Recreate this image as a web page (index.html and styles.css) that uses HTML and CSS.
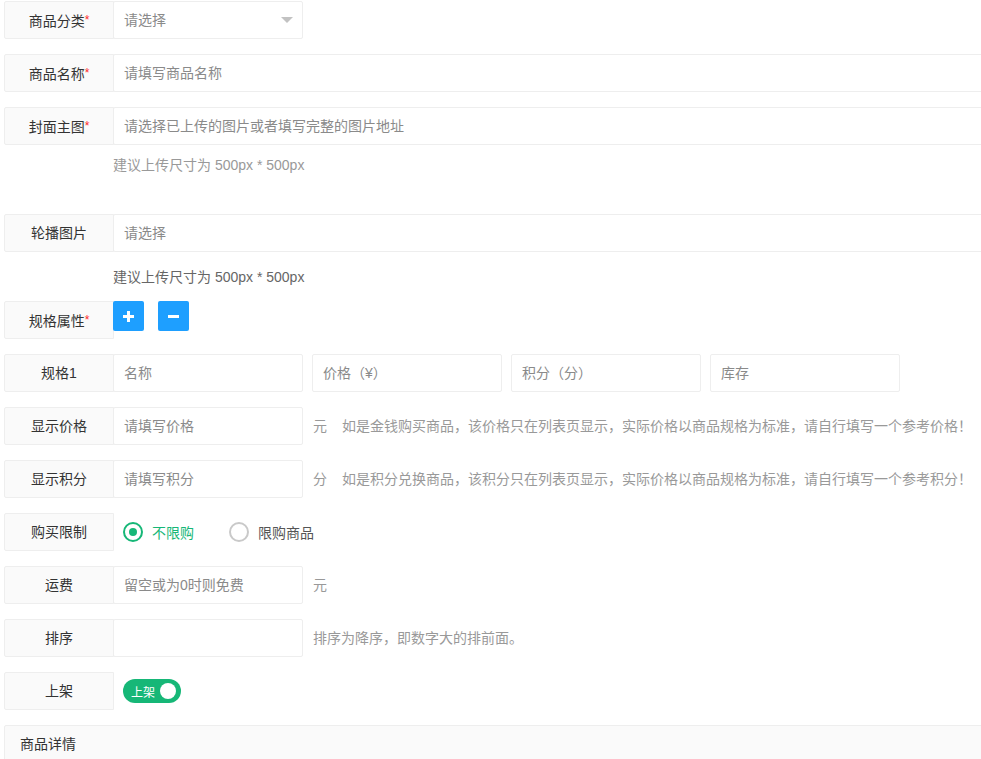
FILE: index.html
```html
<!DOCTYPE html>
<html lang="zh-CN">
<head>
  <meta charset="UTF-8">
  <meta name="viewport" content="width=device-width, initial-scale=1.0">
  <title>添加商品</title>
  <link rel="stylesheet" href="styles.css">
</head>
<body>
  <form class="form">
    <div class="form-item">
      <label class="form-label">商品分类<span class="req">*</span></label>
      <div class="input-inline">
        <input class="input" type="text" placeholder="请选择" readonly>
        <i class="caret"></i>
      </div>
    </div>

    <div class="form-item">
      <label class="form-label">商品名称<span class="req">*</span></label>
      <div class="input-block">
        <input class="input" type="text" placeholder="请填写商品名称">
      </div>
    </div>

    <div class="form-item">
      <label class="form-label">封面主图<span class="req">*</span></label>
      <div class="input-block">
        <input class="input" type="text" placeholder="请选择已上传的图片或者填写完整的图片地址">
        <div class="tip tip-light">建议上传尺寸为 500px * 500px</div>
        <div class="preview"></div>
      </div>
    </div>

    <div class="form-item form-item-tight">
      <label class="form-label">轮播图片</label>
      <div class="input-block">
        <input class="input" type="text" placeholder="请选择">
        <div class="tip tip-dark">建议上传尺寸为 500px * 500px</div>
      </div>
    </div>

    <div class="form-item">
      <label class="form-label">规格属性<span class="req">*</span></label>
      <div class="btn-group">
        <button type="button" class="btn" title="添加规格">
          <svg width="11" height="11" viewBox="0 0 11 11"><path d="M4 0h3v4h4v3H7v4H4V7H0V4h4z" fill="#fff"/></svg>
        </button>
        <button type="button" class="btn" title="删除规格">
          <svg width="11" height="11" viewBox="0 0 11 11"><path d="M0 4h11v3H0z" fill="#fff"/></svg>
        </button>
      </div>
    </div>

    <div class="form-item">
      <label class="form-label">规格1</label>
      <div class="input-inline"><input class="input" type="text" placeholder="名称"></div>
      <div class="input-inline"><input class="input" type="text" placeholder="价格（¥）"></div>
      <div class="input-inline"><input class="input" type="text" placeholder="积分（分）"></div>
      <div class="input-inline"><input class="input" type="text" placeholder="库存"></div>
    </div>

    <div class="form-item">
      <label class="form-label">显示价格</label>
      <div class="input-inline"><input class="input" type="text" placeholder="请填写价格"></div>
      <div class="mid unit">元</div>
      <div class="mid">如是金钱购买商品，该价格只在列表页显示，实际价格以商品规格为标准，请自行填写一个参考价格！</div>
    </div>

    <div class="form-item">
      <label class="form-label">显示积分</label>
      <div class="input-inline"><input class="input" type="text" placeholder="请填写积分"></div>
      <div class="mid unit">分</div>
      <div class="mid">如是积分兑换商品，该积分只在列表页显示，实际价格以商品规格为标准，请自行填写一个参考积分！</div>
    </div>

    <div class="form-item">
      <label class="form-label">购买限制</label>
      <div class="radio-group">
        <span class="radio checked"><i class="radio-icon"></i>不限购</span>
        <span class="radio"><i class="radio-icon"></i>限购商品</span>
      </div>
    </div>

    <div class="form-item">
      <label class="form-label">运费</label>
      <div class="input-inline"><input class="input" type="text" placeholder="留空或为0时则免费"></div>
      <div class="mid">元</div>
    </div>

    <div class="form-item">
      <label class="form-label">排序</label>
      <div class="input-inline"><input class="input" type="text"></div>
      <div class="mid">排序为降序，即数字大的排前面。</div>
    </div>

    <div class="form-item">
      <label class="form-label">上架</label>
      <div class="switch-wrap">
        <span class="switch"><em>上架</em><i class="knob"></i></span>
      </div>
    </div>

    <div class="form-item form-text">
      <label class="form-label">商品详情</label>
      <textarea class="textarea"></textarea>
    </div>
  </form>
</body>
</html>
```

FILE: styles.css
```css
html { overflow: hidden; }
body {
  margin: 0;
  padding: 1px 0 0 4px;
  font-family: "Liberation Sans", "Noto Sans CJK SC", sans-serif;
  font-size: 14px;
  color: #333;
  background: #fff;
}
.form { margin-right: -30px; }

.form-item {
  display: flex;
  align-items: flex-start;
  margin-bottom: 15px;
}
.form-item-tight { margin-bottom: 14px; }

.form-label {
  flex: none;
  box-sizing: border-box;
  width: 110px;
  height: 38px;
  padding: 8px 15px;
  line-height: 20px;
  border: 1px solid #eee;
  border-radius: 2px 0 0 2px;
  background: #fafafa;
  text-align: center;
  white-space: nowrap;
}
.req { color: #ff2a2a; font-size: 12px; vertical-align: 2px; }

.input-block { flex: 1; margin-left: -1px; }
.input-inline {
  position: relative;
  flex: none;
  width: 190px;
  margin-left: -1px;
  margin-right: 10px;
}
.input {
  display: block;
  box-sizing: border-box;
  width: 100%;
  height: 38px;
  padding: 0 10px;
  border: 1px solid #eee;
  border-radius: 2px;
  background: #fff;
  font: inherit;
  color: #333;
  outline: none;
}
.input::placeholder { color: #8a8a8a; }

.caret {
  position: absolute;
  right: 10px;
  top: 16px;
  border-style: solid;
  border-width: 6px 6px 0;
  border-color: #c2c2c2 transparent transparent;
}

.tip { line-height: 20px; }
.tip-light { padding-top: 10px; color: #999; }
.tip-dark { padding-top: 15px; color: #666; }
.preview { height: 24px; }

.btn-group { display: flex; gap: 14px; margin-left: -1px; }
.btn {
  display: flex;
  align-items: center;
  justify-content: center;
  width: 31px;
  height: 30px;
  padding: 0;
  border: none;
  border-radius: 2px;
  background: #1e9fff;
  cursor: pointer;
}

.mid {
  padding: 9px 0;
  line-height: 20px;
  color: #999;
  white-space: nowrap;
}
.unit { margin-right: 15px; }

.radio-group {
  display: flex;
  align-items: center;
  height: 38px;
  padding-left: 10px;
  margin-left: -1px;
}
.radio {
  display: flex;
  align-items: center;
  margin-right: 35px;
  color: #555;
  cursor: pointer;
}
.radio-icon {
  box-sizing: border-box;
  width: 20px;
  height: 20px;
  margin-right: 9px;
  border: 2px solid #c9c9c9;
  border-radius: 50%;
  display: flex;
  align-items: center;
  justify-content: center;
}
.radio.checked { color: #16b777; }
.radio.checked .radio-icon { border-color: #16b777; }
.radio.checked .radio-icon::after {
  content: "";
  width: 8px;
  height: 8px;
  border-radius: 50%;
  background: #16b777;
}

.switch-wrap { padding: 7px 0 0 9px; }
.switch {
  position: relative;
  display: flex;
  align-items: center;
  box-sizing: border-box;
  width: 58px;
  height: 24px;
  padding-left: 8px;
  border-radius: 20px;
  background: #16b777;
}
.switch em {
  font-style: normal;
  font-size: 12px;
  color: #fff;
}
.knob {
  position: absolute;
  right: 5px;
  top: 4px;
  width: 16px;
  height: 16px;
  border-radius: 50%;
  background: #fff;
}

.form-text { flex-direction: column; }
.form-text .form-label {
  width: 100%;
  text-align: left;
  border-radius: 2px 2px 0 0;
}
.textarea {
  box-sizing: border-box;
  width: 100%;
  height: 200px;
  margin-top: -1px;
  border: 1px solid #eee;
  resize: none;
}
```
